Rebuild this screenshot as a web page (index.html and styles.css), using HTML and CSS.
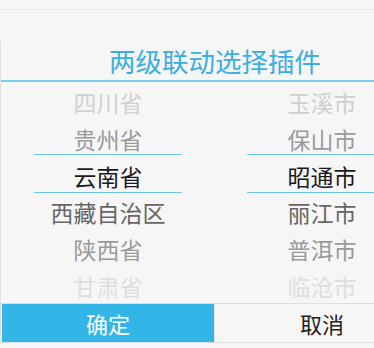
FILE: index.html
```html
<!DOCTYPE html>
<html lang="zh-CN">
<head>
<meta charset="utf-8">
<link rel="stylesheet" href="styles.css">
</head>
<body>
<div class="topbar"></div>
<div class="dialog">
  <div class="title">两级联动选择插件</div>
  <div class="picker">
    <div class="col">
      <div class="row far">四川省</div>
      <div class="row near">贵州省</div>
      <div class="row sel">云南省</div>
      <div class="row next">西藏自治区</div>
      <div class="row near">陕西省</div>
      <div class="row fade">甘肃省</div>
      <div class="line l1"></div>
      <div class="line l2"></div>
    </div>
    <div class="col">
      <div class="row far">玉溪市</div>
      <div class="row near">保山市</div>
      <div class="row sel">昭通市</div>
      <div class="row next">丽江市</div>
      <div class="row near">普洱市</div>
      <div class="row fade">临沧市</div>
      <div class="line l1 r"></div>
      <div class="line l2 r"></div>
    </div>
  </div>
  <div class="buttons">
    <div class="btn ok">确定</div>
    <div class="btn cancel">取消</div>
  </div>
</div>
</body>
</html>
```

FILE: styles.css
```css
html, body {
  margin: 0;
  padding: 0;
  background: #f6f6f6;
  overflow: hidden;
  width: 374px;
  height: 348px;
  font-family: "Noto Sans CJK SC", "Noto Sans", sans-serif;
}
.topbar {
  height: 9px;
  border-bottom: 1px solid #e9e9e9;
}
.dialog {
  margin-top: 31px;
  width: 428px;
  border-left: 1px solid #e0e0e0;
  background: #f6f6f6;
}
.title {
  height: 39px;
  line-height: 39px;
  text-align: center;
  font-size: 26.5px;
  color: #3aaee2;
  border-bottom: 2px solid #7fcdee;
}
.picker {
  height: 221px;
  display: grid;
  grid-template-columns: 214px 214px;
  overflow: hidden;
}
.col {
  position: relative;
  padding-top: 2px;
}
.row {
  height: 36.8px;
  line-height: 36.8px;
  text-align: center;
  font-size: 23px;
}
.far { color: #d0d0d0; }
.near { color: #9a9a9a; }
.sel { color: #1a1a1a; }
.next { color: #666; }
.fade {
  color: #dedede;
  height: 34px;
  line-height: 34px;
  padding-top: 1px;
}
.line {
  position: absolute;
  left: 33px;
  width: 148px;
  height: 1px;
  background: #6cc8f0;
}
.line.r { left: 32px; }
.l1 { top: 72px; }
.l2 { top: 110px; }
.buttons {
  display: grid;
  grid-template-columns: 212px 215px;
  padding-left: 1px;
  border-top: 1px solid #dedede;
  border-bottom: 1px solid #dedede;
}
.btn {
  height: 38px;
  line-height: 38px;
  text-align: center;
  font-size: 22px;
}
.ok {
  background: #33b5e8;
  color: #fff;
}
.cancel {
  background: #f6f6f6;
  color: #222;
  border-left: 1px solid #e4e4e4;
}
```
